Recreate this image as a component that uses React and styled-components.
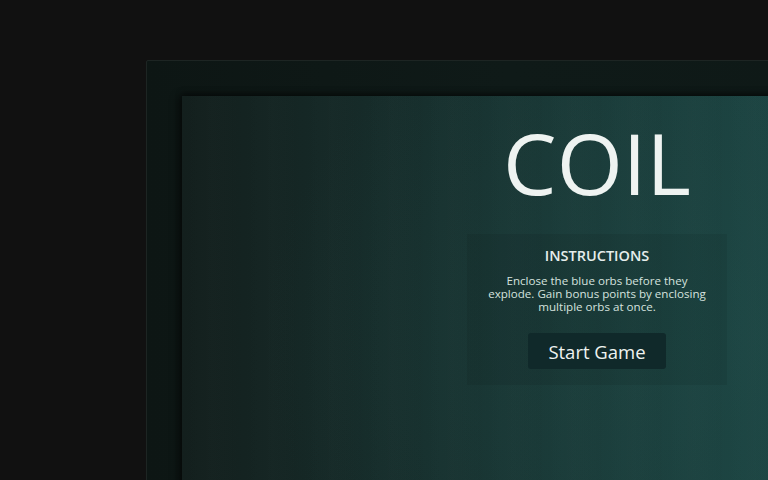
import styled, { createGlobalStyle } from "styled-components";

const GlobalStyle = createGlobalStyle`
  html, body {
    margin: 0;
    padding: 0;
    background: #111111;
  }
  body {
    font-family: "Open Sans", "Noto Sans", sans-serif;
  }
`;

const Screen = styled.div`
  width: 768px;
  height: 480px;
  overflow: hidden;
  background: #111111;
  padding: 60px 0 0 146px;
  box-sizing: border-box;
`;

const Cabinet = styled.div`
  width: 900px;
  height: 560px;
  box-sizing: border-box;
  padding: 35px;
  background: linear-gradient(90deg, #0d1614 0%, #0f1a18 40%, #0e1816 100%);
  border: 1px solid #1d2523;
  border-radius: 2px;
`;

const Stage = styled.div`
  height: 100%;
  box-sizing: border-box;
  padding: 22px 0 0 285px;
  background:
    repeating-linear-gradient(
      90deg,
      rgba(255, 255, 255, 0) 0px,
      rgba(255, 255, 255, 0.006) 30px,
      rgba(0, 0, 0, 0.01) 60px
    ),
    radial-gradient(ellipse 480px 380px at 560px 240px, rgba(32, 78, 75, 0.35), rgba(32, 78, 75, 0) 100%),
    linear-gradient(90deg, #131f1d 0%, #162b29 22%, #1a3a38 50%, #1c4543 75%, #1d4846 100%);
  box-shadow: -4px 0 8px rgba(0, 0, 0, 0.45), 0 -3px 6px rgba(0, 0, 0, 0.35);
`;

const Menu = styled.div`
  width: 260px;
  display: flex;
  flex-direction: column;
  align-items: center;
`;

const Title = styled.h1`
  margin: 0;
  font-size: 85px;
  line-height: 88px;
  font-weight: 400;
  color: #eef3f1;
  white-space: nowrap;
`;

const Panel = styled.section`
  margin-top: 28px;
  width: 100%;
  height: 151px;
  box-sizing: border-box;
  padding: 13px 18px 15px;
  background: rgba(0, 0, 0, 0.07);
  display: flex;
  flex-direction: column;
  align-items: center;
`;

const Heading = styled.h2`
  margin: 0;
  font-size: 14.5px;
  line-height: 18px;
  font-weight: 600;
  color: #e6eeec;
`;

const Text = styled.p`
  margin: 9px 0 0;
  max-width: 222px;
  font-size: 11.6px;
  line-height: 13px;
  text-align: center;
  color: #d5e2df;
`;

const StartButton = styled.button`
  margin-top: 20px;
  width: 138px;
  height: 36px;
  border: none;
  border-radius: 3px;
  background: #10292a;
  color: #eef3f1;
  font-family: inherit;
  font-size: 18.5px;
  cursor: pointer;
`;

export default function App() {
  return (
    <>
      <GlobalStyle />
      <Screen>
        <Cabinet>
          <Stage>
            <Menu>
              <Title>COIL</Title>
              <Panel>
                <Heading>INSTRUCTIONS</Heading>
                <Text>
                  Enclose the blue orbs before they explode. Gain bonus points by
                  enclosing multiple orbs at once.
                </Text>
                <StartButton>Start Game</StartButton>
              </Panel>
            </Menu>
          </Stage>
        </Cabinet>
      </Screen>
    </>
  );
}
